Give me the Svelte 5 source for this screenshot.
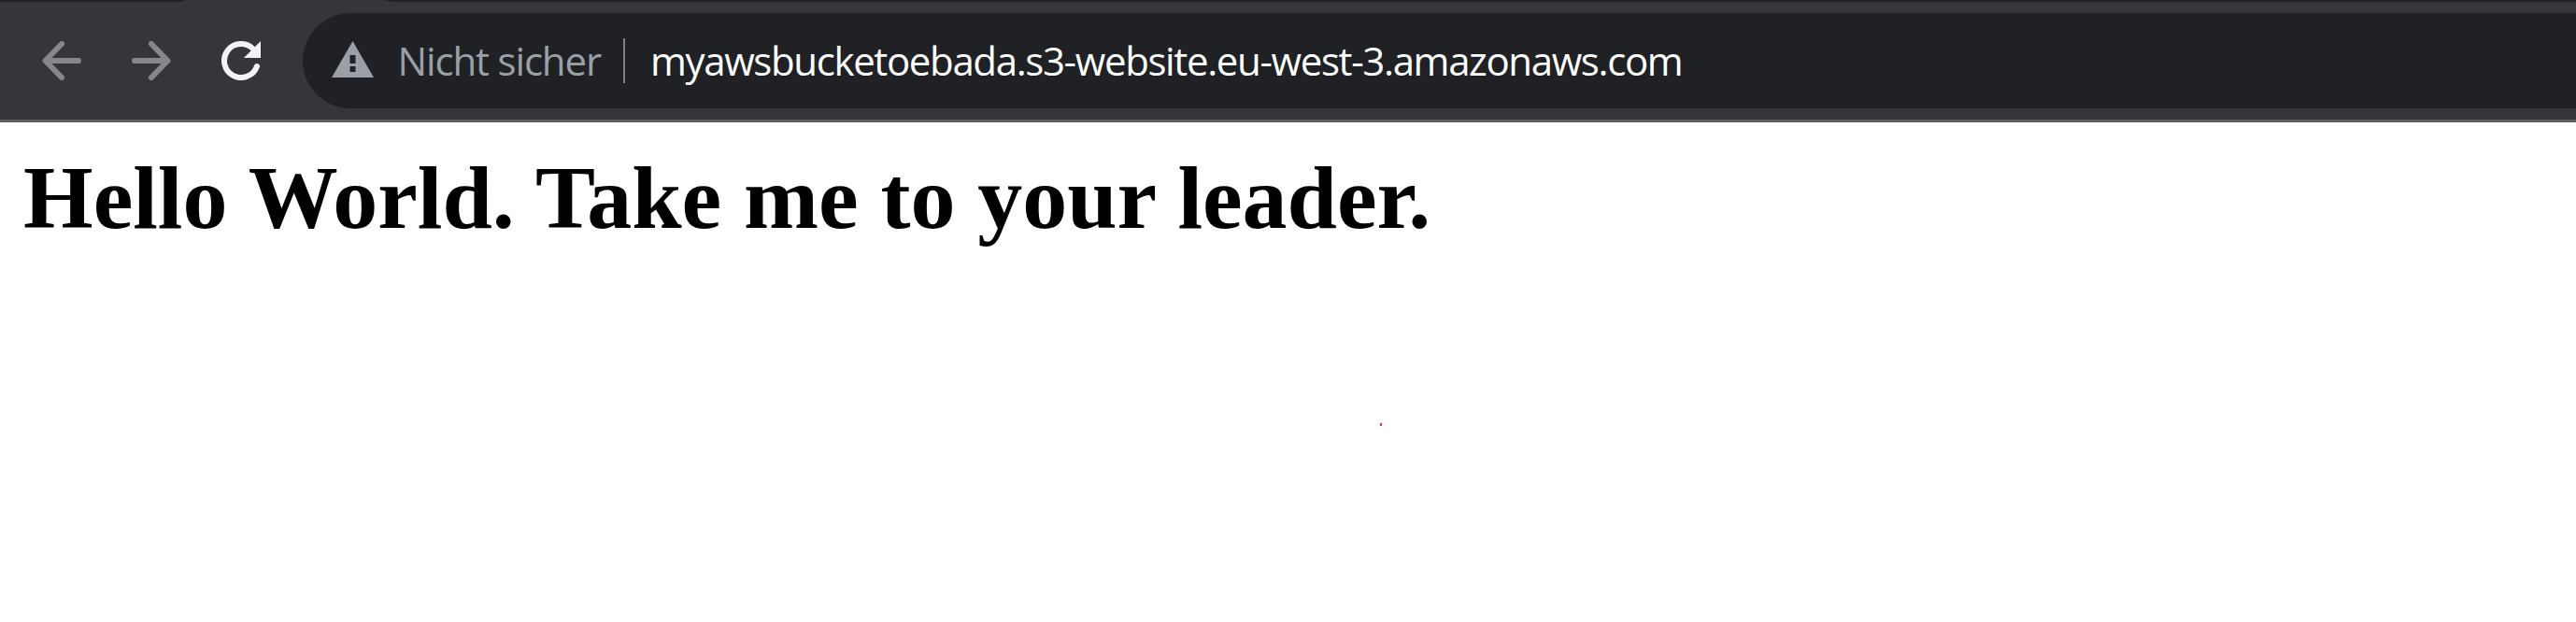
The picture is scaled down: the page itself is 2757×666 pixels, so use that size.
<script>
  const status = 'Nicht sicher';
  const address = 'myawsbucketoebada.s3-website.eu-west-3.amazonaws.com';
</script>

<div class="browser">
  <svg class="tabs" width="2757" height="2" viewBox="0 0 2757 2" aria-hidden="true">
    <path d="M0 0H199Q195 2 189 2H0ZM410 0H2757V2H428Q418 2 410 0Z" fill="#202124" />
  </svg>
  <header class="toolbar">
    <nav class="actions">
      <svg width="42" height="42" viewBox="0 0 42 42" aria-hidden="true">
        <path d="M21 3L3.5 21L21 39M4 21H39" fill="none" stroke="#86878b" stroke-width="6" stroke-linecap="round" stroke-linejoin="round" />
      </svg>
      <svg width="42" height="42" viewBox="0 0 42 42" aria-hidden="true">
        <path d="M21 3L38.5 21L21 39M38 21H3" fill="none" stroke="#86878b" stroke-width="6" stroke-linecap="round" stroke-linejoin="round" />
      </svg>
      <svg width="42" height="42" viewBox="0 0 42 42" aria-hidden="true">
        <path d="M34 8.5A18 18 0 1 0 38 27" fill="none" stroke="#f1f3f4" stroke-width="6" stroke-linecap="round" />
        <path d="M42 0V18H24Z" fill="#f1f3f4" />
      </svg>
    </nav>
    <div class="omnibox">
      <svg class="warning" width="45" height="39" viewBox="0 0 45 39" aria-hidden="true">
        <path d="M22.5 0L45 39H0ZM19.5 15V24H25.5V15ZM19.5 27V33H25.5V27Z" fill="#9aa0a6" fill-rule="evenodd" />
      </svg>
      <span class="status">{status}</span>
      <i class="divider"></i>
      <span class="address">{address}</span>
    </div>
  </header>
  <main>
    <h1>Hello World. Take me to your leader.</h1>
    <i class="mark"></i>
  </main>
</div>

<style>
  :global(body) { margin: 0; background: #fff; }
  .browser { height: 666px; overflow: hidden; background: #fff; }
  .tabs { display: block; background: #35363a; }
  .toolbar {
    box-sizing: border-box;
    height: 129px;
    padding-top: 12px;
    display: flex;
    align-items: flex-start;
    background: #35363a;
    border-bottom: 3px solid #5f6063;
  }
  .actions {
    box-sizing: border-box;
    flex: 0 0 324px;
    height: 102px;
    padding-left: 45px;
    display: flex;
    align-items: center;
    gap: 54px;
  }
  .omnibox {
    box-sizing: border-box;
    flex: 1;
    height: 102px;
    padding-left: 31px;
    display: flex;
    align-items: center;
    background: #202124;
    border-radius: 51px 0 0 51px;
    font-family: "Open Sans", "Noto Sans", sans-serif;
    font-size: 42px;
    line-height: 58px;
    letter-spacing: -1.37px;
    white-space: nowrap;
  }
  .warning { flex: none; margin-top: -3px; }
  .status { box-sizing: border-box; flex: 0 0 267px; padding-left: 25.5px; color: #9aa0a6; letter-spacing: -1.15px; }
  .divider { flex: none; width: 2px; height: 48px; background: #7e7f82; }
  .address { padding-left: 27px; color: #fff; }
  main { padding: 26px 25px; }
  h1 {
    margin: 0;
    font: bold 96px/110px "Liberation Serif", serif;
    letter-spacing: -0.04px;
    color: #000;
    white-space: nowrap;
  }
  .mark { display: block; width: 2px; height: 3px; margin: 186px 0 0 1452px; background: #f33; }
</style>
